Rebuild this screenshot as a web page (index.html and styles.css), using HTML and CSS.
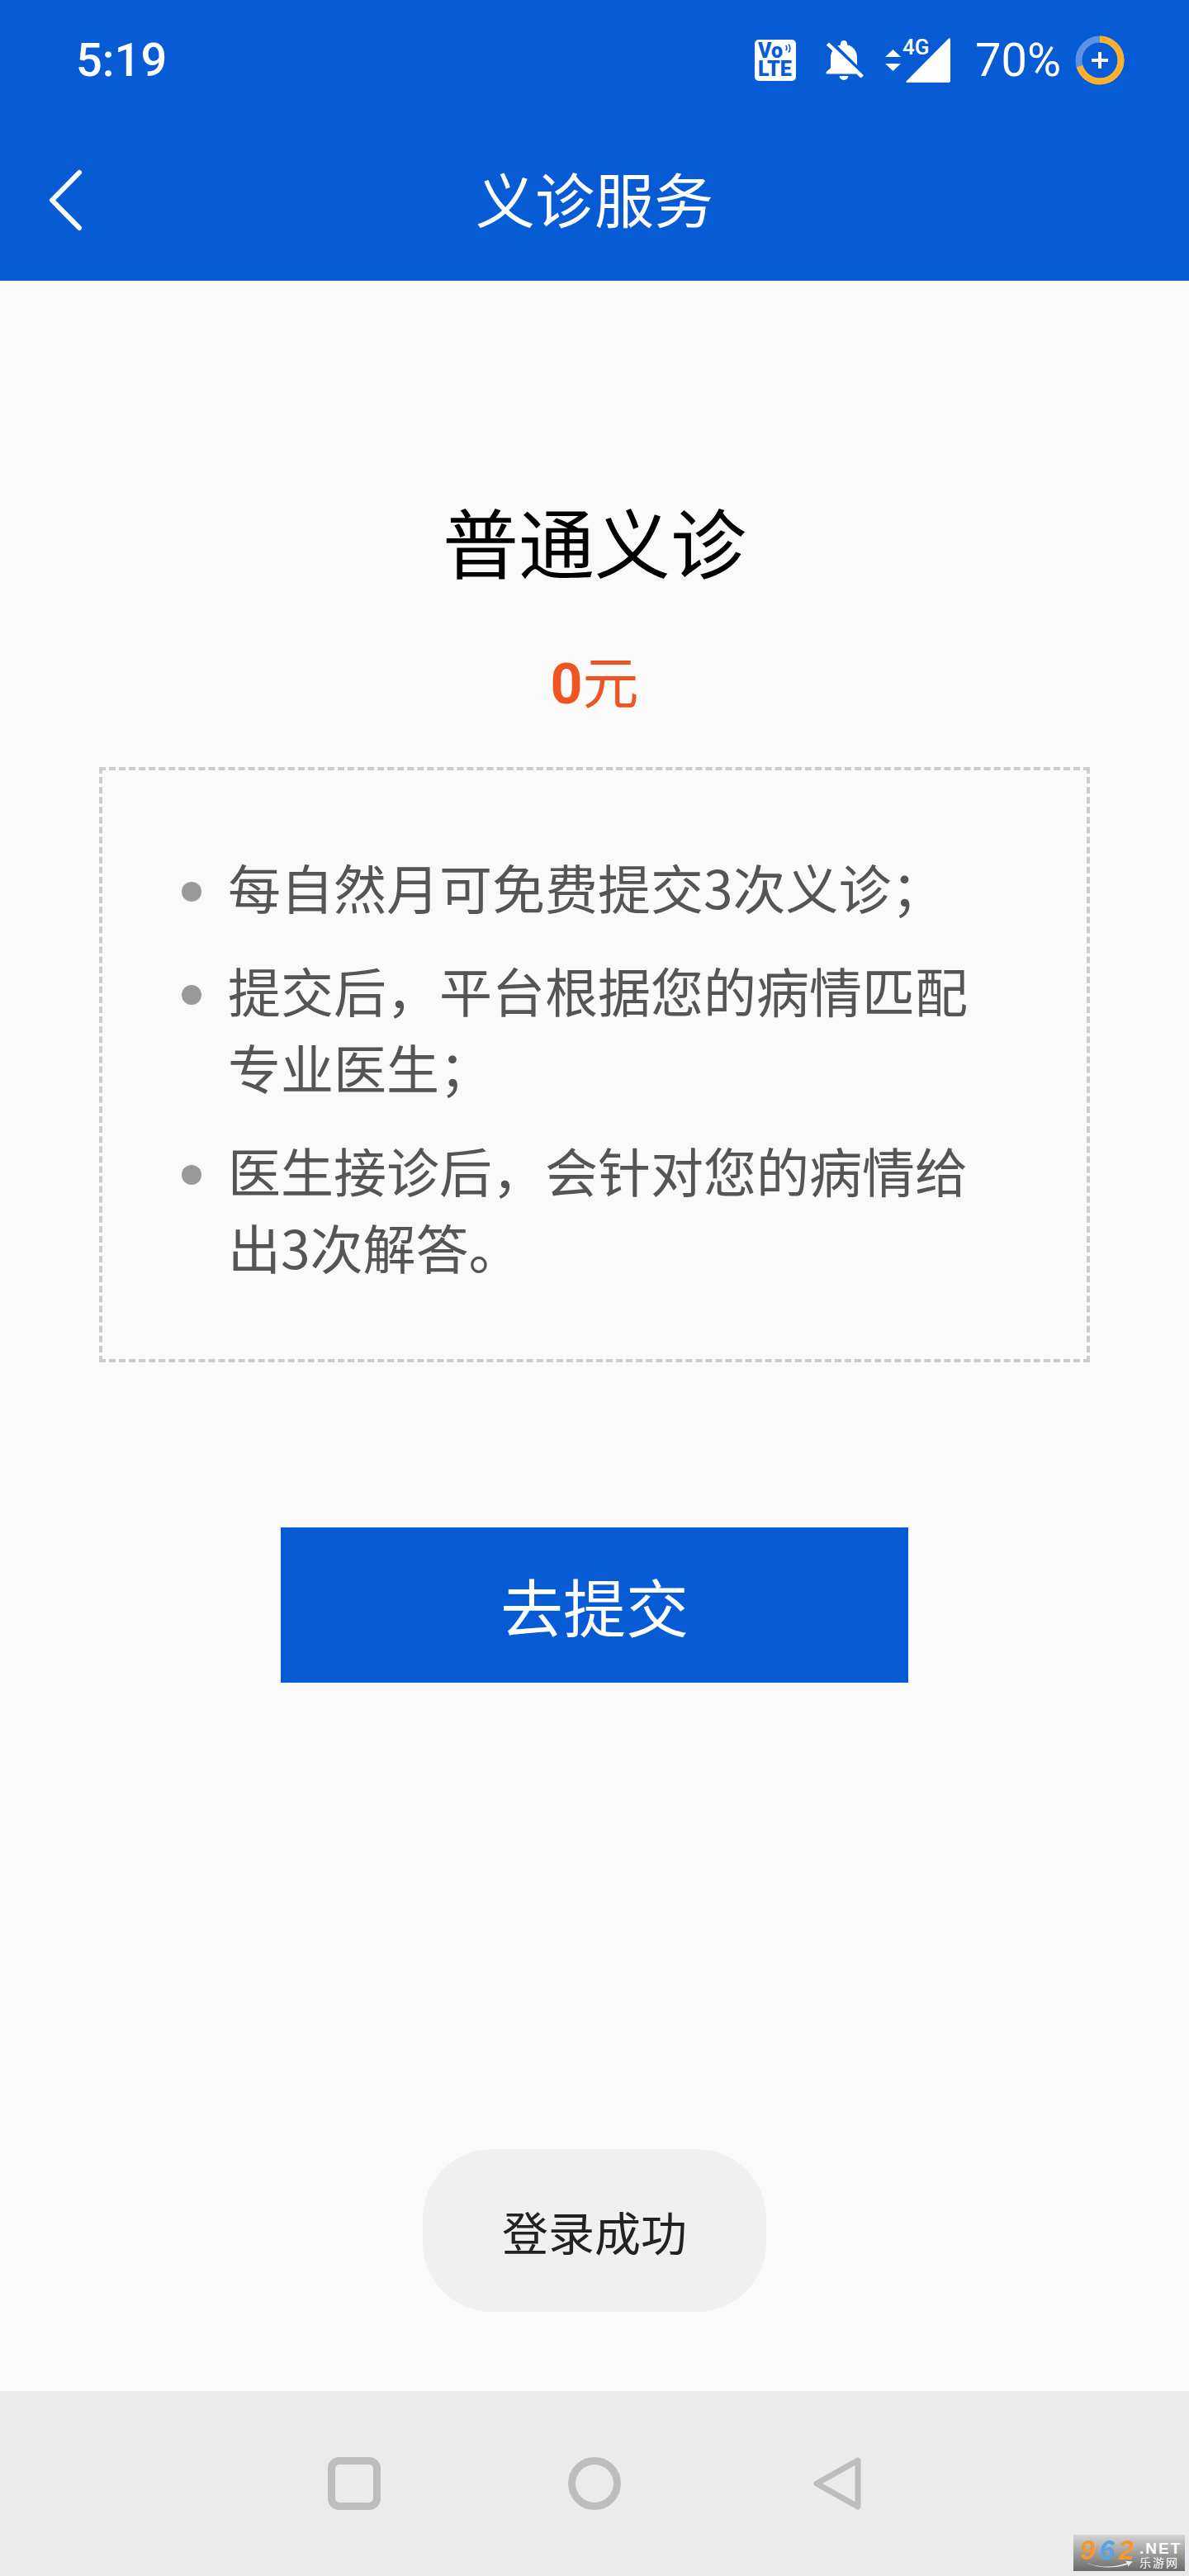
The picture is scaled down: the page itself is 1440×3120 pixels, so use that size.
FILE: index.html
```html
<!DOCTYPE html>
<html lang="zh-CN">

<head>
  <meta charset="UTF-8">
  <meta name="viewport" content="width=device-width, initial-scale=1.0">
  <title>义诊服务</title>
  <link rel="stylesheet" href="styles.css">
</head>

<body>
  <div class="phone">
    <div class="top">
      <div class="status">
        <span class="time">5:19</span>
        <div class="status-right">
          <div class="volte">
            Vo LTE
            <svg class="volte-waves" viewBox="0 0 12 14">
              <path d="M2 3c2 2 2 5 0 7M6 1c3 3 3 9 0 12" fill="none" stroke="#075cd6" stroke-width="2" />
            </svg>
          </div>
          <svg class="bell" viewBox="3 2.5 18 19.5" preserveAspectRatio="none">
            <path fill="#fff" d="M20 18.69L7.84 6.14 5.27 3.49 4 4.76l2.8 2.8v.01c-.52.99-.8 2.16-.8 3.42v5l-2 2v1h13.73l2 2L21 19.72l-1-1.03zM12 22c1.11 0 2-.89 2-2h-4c0 1.11.89 2 2 2zm6-7.32V11c0-3.08-1.64-5.64-4.5-6.32V4c0-.83-.67-1.5-1.5-1.5s-1.5.67-1.5 1.5v.68c-.15.03-.29.08-.42.12-.1.03-.2.07-.3.11h-.01c-.2.08-.4.17-.59.27-.01 0-.01 0-.02.01L18 14.68z" />
          </svg>
          <div class="signal">
            <svg class="arrows" viewBox="0 0 19 26">
              <path fill="#fff" d="M9.5 0L19 9H0zM0 17h19l-9.5 9z" />
            </svg>
            <span class="net">4G</span>
            <svg class="bars" viewBox="0 0 54 54">
              <path fill="#fff" d="M52 0.5c1.2-.8 2 0 2 1.5V52c0 1.2-.8 2-2 2H2c-1.6 0-2-1-1-2z" />
            </svg>
          </div>
          <span class="battery-text">70%</span>
          <svg class="battery" viewBox="0 0 60 60">
            <circle cx="30" cy="30" r="25.5" fill="none" stroke="#5c92e6" stroke-width="8" />
            <circle cx="30" cy="30" r="25.5" fill="none" stroke="#fbb12f" stroke-width="8" stroke-dasharray="112 160" transform="rotate(-90 30 30)" />
            <path d="M30 20v20M20 30h20" stroke="#fff" stroke-width="4" />
          </svg>
        </div>
      </div>
      <div class="header">
        <svg class="back" viewBox="0 0 42 76">
          <path d="M37 4L4 37.5 37 71" fill="none" stroke="#fff" stroke-width="6" stroke-linecap="round" stroke-linejoin="round" />
        </svg>
        <h1 class="header-title">义诊服务</h1>
      </div>
    </div>

    <div class="main">
      <h2 class="plan-name">普通义诊</h2>
      <p class="plan-price"><b>0</b>元</p>
      <ul class="rules">
        <li>每自然月可免费提交3次义诊&#xFF1B;</li>
        <li>提交后&#xFF0C;平台根据您的病情匹配专业医生&#xFF1B;</li>
        <li>医生接诊后&#xFF0C;会针对您的病情给出3次解答。</li>
      </ul>
      <button class="submit">去提交</button>
    </div>

    <div class="navbar">
      <span class="nav-square"></span>
      <span class="nav-circle"></span>
      <svg class="nav-back" viewBox="0 0 58 64">
        <path d="M54 4L4 32l50 28z" fill="none" stroke="#bdbdbd" stroke-width="7" stroke-linejoin="round" />
      </svg>
    </div>

    <div class="toast">登录成功</div>

    <div class="mark">
      <span class="mark-num">9<i>6</i>2</span>
      <svg class="mark-swoosh" viewBox="0 0 70 14">
        <path d="M0 2c18 10 42 10 62 3l-3-3 11 1-7 7 0-3C40 14 16 12 0 2z" fill="#eeeeee" />
      </svg>
      <span class="mark-net">.NET</span>
      <span class="mark-cn">乐游网</span>
    </div>
  </div>
</body>

</html>
```

FILE: styles.css
```css
* {
  box-sizing: border-box;
}

body {
  margin: 0;
  font-family: "Noto Sans CJK SC", "Noto Sans", sans-serif;
}

.phone {
  position: relative;
  display: flex;
  flex-direction: column;
  width: 1440px;
  height: 3120px;
  background-color: #fafafa;
  overflow: hidden;
}

.top {
  height: 340px;
  background-color: #075cd6;
  color: #fff;
}

.status {
  display: flex;
  justify-content: space-between;
  align-items: center;
  height: 146px;
  padding: 0 78px 0 92px;
}

.time {
  font-family: Roboto, sans-serif;
  font-size: 56px;
  font-weight: 500;
}

.status-right {
  display: flex;
  align-items: center;
}

.volte {
  position: relative;
  width: 50px;
  height: 50px;
  margin-right: 34px;
  padding: 3px 0 0 4px;
  background-color: #fff;
  border-radius: 5px;
  color: #075cd6;
  font-family: Roboto, sans-serif;
  font-size: 25px;
  font-weight: 900;
  line-height: 22px;
}

.volte-waves {
  position: absolute;
  top: 4px;
  right: 4px;
  width: 10px;
  height: 13px;
}

.bell {
  width: 48px;
  height: 48px;
  margin-right: 26px;
}

.signal {
  position: relative;
  width: 79px;
  height: 54px;
  margin-right: 30px;
}

.arrows {
  position: absolute;
  left: 0;
  top: 14px;
  width: 19px;
  height: 26px;
}

.net {
  position: absolute;
  left: 21px;
  top: -6px;
  z-index: 1;
  font-family: Roboto, sans-serif;
  font-size: 26px;
  font-weight: 500;
  line-height: 34px;
}

.bars {
  position: absolute;
  right: 0;
  top: 0;
  width: 54px;
  height: 54px;
}

.battery-text {
  margin-right: 17px;
  font-family: Roboto, sans-serif;
  font-size: 56px;
  font-weight: 400;
  line-height: 60px;
}

.battery {
  width: 60px;
  height: 60px;
}

.header {
  display: flex;
  justify-content: center;
  align-items: center;
  position: relative;
  height: 194px;
  padding-bottom: 8px;
}

.back {
  position: absolute;
  left: 59px;
  top: 59px;
  width: 42px;
  height: 76px;
}

.header-title {
  margin: 0;
  font-size: 72px;
  font-weight: 400;
  line-height: 96px;
}

.main {
  flex: 1;
  display: flex;
  flex-direction: column;
  align-items: center;
  padding-top: 250px;
}

.plan-name {
  margin: 0;
  color: #000;
  font-size: 92px;
  font-weight: 400;
  line-height: 128px;
}

.plan-price {
  margin: 57px 0 0;
  color: #ee5522;
  font-size: 68px;
  line-height: 96px;
}

.plan-price b {
  font-family: Roboto, sans-serif;
  font-weight: 700;
}

.rules {
  width: 1200px;
  height: 721px;
  margin: 52px 0 0;
  padding: 94px 140px 0 152px;
  border: 4px dashed #cccccc;
  color: #555555;
  font-size: 64px;
  line-height: 93px;
  list-style: none;
}

.rules li {
  position: relative;
  margin-bottom: 32px;
}

.rules li::before {
  content: "";
  position: absolute;
  left: -56px;
  top: 41px;
  width: 24px;
  height: 24px;
  background-color: #999999;
  border-radius: 50%;
}

.submit {
  width: 760px;
  height: 188px;
  margin-top: 200px;
  border: none;
  background-color: #075cd6;
  color: #fff;
  font-family: inherit;
  font-size: 76px;
}

.navbar {
  display: flex;
  align-items: center;
  height: 224px;
  padding-left: 397px;
  background-color: #ebebeb;
}

.nav-square {
  width: 64px;
  height: 64px;
  border: 9px solid #bdbdbd;
  border-radius: 14px;
}

.nav-circle {
  width: 64px;
  height: 64px;
  margin: 0 233px 0 227px;
  border: 9px solid #bdbdbd;
  border-radius: 50%;
}

.nav-back {
  width: 58px;
  height: 64px;
}

.toast {
  position: absolute;
  left: 512px;
  top: 2603px;
  display: flex;
  justify-content: center;
  align-items: center;
  width: 416px;
  height: 197px;
  background-color: #f0f0f0;
  border-radius: 84px;
  color: #222222;
  font-size: 56px;
}

.mark {
  position: absolute;
  left: 1300px;
  top: 3070px;
  width: 135px;
  height: 44px;
  background: linear-gradient(#d4d4d4, #6a6a6a);
  color: #fff;
  font-family: "Liberation Sans", sans-serif;
  line-height: 1;
}

.mark-num {
  position: absolute;
  left: 8px;
  top: 2px;
  color: #f5992c;
  font-size: 33px;
  font-weight: 700;
  font-style: italic;
  letter-spacing: 5px;
}

.mark-num i {
  color: #55a5e5;
}

.mark-swoosh {
  position: absolute;
  left: 7px;
  top: 30px;
  width: 70px;
  height: 12px;
}

.mark-net {
  position: absolute;
  left: 80px;
  top: 7px;
  font-size: 19px;
  font-weight: 700;
  letter-spacing: 2px;
}

.mark-cn {
  position: absolute;
  left: 80px;
  top: 26px;
  font-family: "Noto Sans CJK SC", sans-serif;
  font-size: 14px;
  letter-spacing: 2px;
}
```
